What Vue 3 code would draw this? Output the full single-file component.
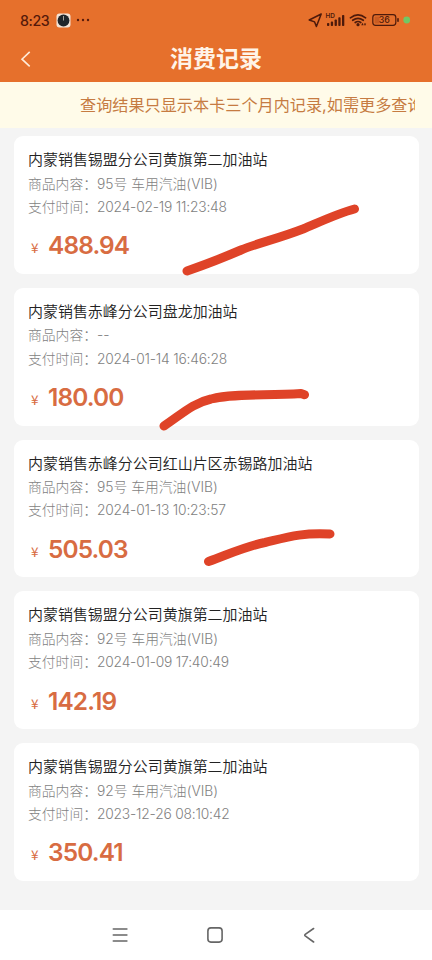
<script setup>
const records = [
  { station: '内蒙销售锡盟分公司黄旗第二加油站', product: '95号 车用汽油(VIB)', time: '2024-02-19 11:23:48', amount: '488.94' },
  { station: '内蒙销售赤峰分公司盘龙加油站', product: '--', time: '2024-01-14 16:46:28', amount: '180.00' },
  { station: '内蒙销售赤峰分公司红山片区赤锡路加油站', product: '95号 车用汽油(VIB)', time: '2024-01-13 10:23:57', amount: '505.03' },
  { station: '内蒙销售锡盟分公司黄旗第二加油站', product: '92号 车用汽油(VIB)', time: '2024-01-09 17:40:49', amount: '142.19' },
  { station: '内蒙销售锡盟分公司黄旗第二加油站', product: '92号 车用汽油(VIB)', time: '2023-12-26 08:10:42', amount: '350.41' },
]
</script>

<template>
  <div class="screen">
    <header class="header">
      <div class="status">
        <span class="clock">8:23</span>
        <svg class="app-badge" width="15" height="15" viewBox="0 0 15 15">
          <rect x=".5" y=".5" width="14" height="14" rx="3" fill="#f3e4d8" />
          <circle cx="7.5" cy="7.5" r="5.9" fill="#20262b" />
          <path d="M7.5 3v4.5" stroke="#b9b4ad" stroke-width=".9" />
        </svg>
        <svg class="more" width="14" height="4" viewBox="0 0 14 4" fill="#5a1c0c">
          <circle cx="2" cy="2" r="1.2" /><circle cx="7" cy="2" r="1.2" /><circle cx="12" cy="2" r="1.2" />
        </svg>
        <svg class="signals" width="106" height="20" viewBox="0 0 106 20" fill="none" stroke="#4d1a0b">
          <path d="M13.2 4 1.2 10l5.4 1.9L8.4 16.5Z" stroke-width="1.5" stroke-linejoin="round" />
          <g fill="#4d1a0b" stroke="none">
            <text x="17.6" y="8.3" class="hd">HD</text>
            <rect x="19" y="13" width="2.3" height="3" rx=".8" />
            <rect x="22.8" y="11.6" width="2.3" height="4.4" rx=".8" />
            <rect x="26.6" y="9.5" width="2.3" height="6.5" rx=".8" />
            <rect x="30.3" y="7.2" width="2.3" height="8.8" rx=".8" />
            <rect x="34" y="5" width="2.3" height="11" rx=".8" />
            <circle cx="50" cy="14.7" r="1.6" />
            <path d="m54.6 12.8-1.4 2.4h2.4ZM57 16l-1.2-2.4h2.4Z" />
          </g>
          <g stroke-width="1.7" stroke-linecap="round">
            <path d="M42.4 7.8Q50 1.9 57.6 7.8M44.7 10.3Q50 6.3 55.3 10.3M47.2 12.5Q50 10.5 52.8 12.5" />
          </g>
          <rect x="64.8" y="4.7" width="23" height="10.6" rx="2.8" stroke-width="1.2" />
          <path d="M90 8.7v2.6" stroke-width="1.6" stroke-linecap="round" />
          <rect x="66.5" y="6.5" width="5" height="7" rx="1" fill="#c95c22" stroke="none" />
          <text x="76.4" y="13.2" class="battery">36</text>
          <circle cx="98.7" cy="10" r="3.4" fill="#70c765" stroke="none" />
        </svg>
      </div>
      <div class="navbar">
        <svg class="back" width="12" height="18" viewBox="0 0 12 18" fill="none" stroke="#ffebd8" stroke-width="1.6">
          <path d="M9.7 1.8 2 9.2l7.7 7.2" />
        </svg>
        <h1>消费记录</h1>
      </div>
    </header>

    <div class="notice"><div class="ticker">查询结果只显示本卡三个月内记录,如需更多查询</div></div>

    <main class="list">
      <article v-for="r in records" :key="r.time" class="card">
        <h2>{{ r.station }}</h2>
        <p><span class="label">商品内容：</span><span>{{ r.product }}</span></p>
        <p><span class="label">支付时间：</span><span class="time">{{ r.time }}</span></p>
        <div class="price"><span class="yen">¥</span><strong>{{ r.amount }}</strong></div>
      </article>
    </main>

    <nav class="sysbar">
      <svg width="16" height="16" viewBox="0 0 16 16"><path d="M1.3 2h13.6M1.3 8h13.6M1.3 14h13.6" /></svg>
      <svg width="16" height="16" viewBox="0 0 16 16"><rect x=".9" y=".9" width="14.2" height="14.2" rx="3" /></svg>
      <svg width="16" height="16" viewBox="0 0 16 16"><path d="M12.6 1.5 4.2 7.4Q3.3 8.1 4.2 8.9L12.6 15" /></svg>
    </nav>

    <svg class="marks" width="432" height="960" viewBox="0 0 432 960">
      <path d="M187 271Q218 260 241 250C258 243 277 239 303 229C322 221 339 213 354.5 209" />
      <path d="M164 426C182 414 193 403 211 399C235 393 266 396 301 393.5L304.5 394.7" />
      <path d="M208.5 561.5C227 555 246 546 265 542.5C288 537 302 532.5 330 534" />
    </svg>
  </div>
</template>

<style>
body { margin: 0; }
</style>

<style scoped>
.screen {
  position: relative;
  width: 432px;
  height: 960px;
  overflow: hidden;
  display: flex;
  flex-direction: column;
  background: #f4f4f4;
  font-family: Inter, "Noto Sans CJK SC", sans-serif;
}
.header { height: 82px; flex: none; background: #e6702c; }
.status { height: 40px; padding: 0 16px 0 20px; display: flex; align-items: center; box-sizing: border-box; }
.clock { font-size: 14.2px; color: #54190a; font-weight: 500; width: 30px; white-space: nowrap; letter-spacing: -.4px; }
.app-badge { margin-left: 6px; }
.more { margin-left: 5px; }
.signals { margin-left: auto; margin-right: 2px; }
.hd { font-size: 6.4px; font-weight: 600; }
.battery { font-size: 8.8px; font-weight: 500; fill: #4d1a0b; stroke: none; text-anchor: middle; }
.navbar { height: 42px; display: grid; grid-template-columns: 52px 1fr 52px; align-items: center; padding-bottom: 4px; box-sizing: border-box; }
.back { margin-left: 20px; }
h1 { margin: 0; text-align: center; font-size: 23px; line-height: 34px; font-weight: 700; color: #fff4e8; }
.notice { height: 46px; flex: none; box-sizing: border-box; padding: 0 17px 0 80px; background: #fffbe9; display: flex; align-items: center; }
.ticker { overflow: hidden; white-space: nowrap; font-size: 16.15px; line-height: 24px; color: #c67b42; }
.list { flex: 1; padding: 8px 13.5px 0 14px; display: flex; flex-direction: column; gap: 14px; }
.card { height: 137.8px; box-sizing: border-box; padding: 12px 14px 0; background: #fff; border-radius: 9px; }
h2 { margin: 0 0 .6px; font-size: 14.97px; line-height: 24px; font-weight: 350; color: #222; white-space: nowrap; }
p { margin: 0; display: flex; font-size: 13.8px; line-height: 23.3px; font-weight: 300; color: #7f7f7f; white-space: nowrap; }
.label { width: 69px; flex: none; }
.time { letter-spacing: -.2px; }
.price { display: flex; align-items: baseline; height: 34px; margin-top: 9px; line-height: 34px; color: #d86c42; }
.yen { width: 17px; padding-left: 3px; font-size: 13.5px; font-family: "Noto Sans CJK SC", sans-serif; position: relative; top: -1px; }
strong { font-size: 24.4px; font-weight: 600; letter-spacing: -.85px; }
.sysbar { height: 50px; flex: none; background: #fff; display: flex; justify-content: center; align-items: center; gap: 78.5px; padding-right: 3px; box-sizing: border-box; }
.sysbar svg { fill: none; stroke: #666; stroke-width: 1.6; stroke-linecap: round; stroke-linejoin: round; }
.marks { position: absolute; inset: 0; pointer-events: none; fill: none; stroke: #df4328; stroke-width: 9; stroke-linecap: round; stroke-linejoin: round; }
</style>
